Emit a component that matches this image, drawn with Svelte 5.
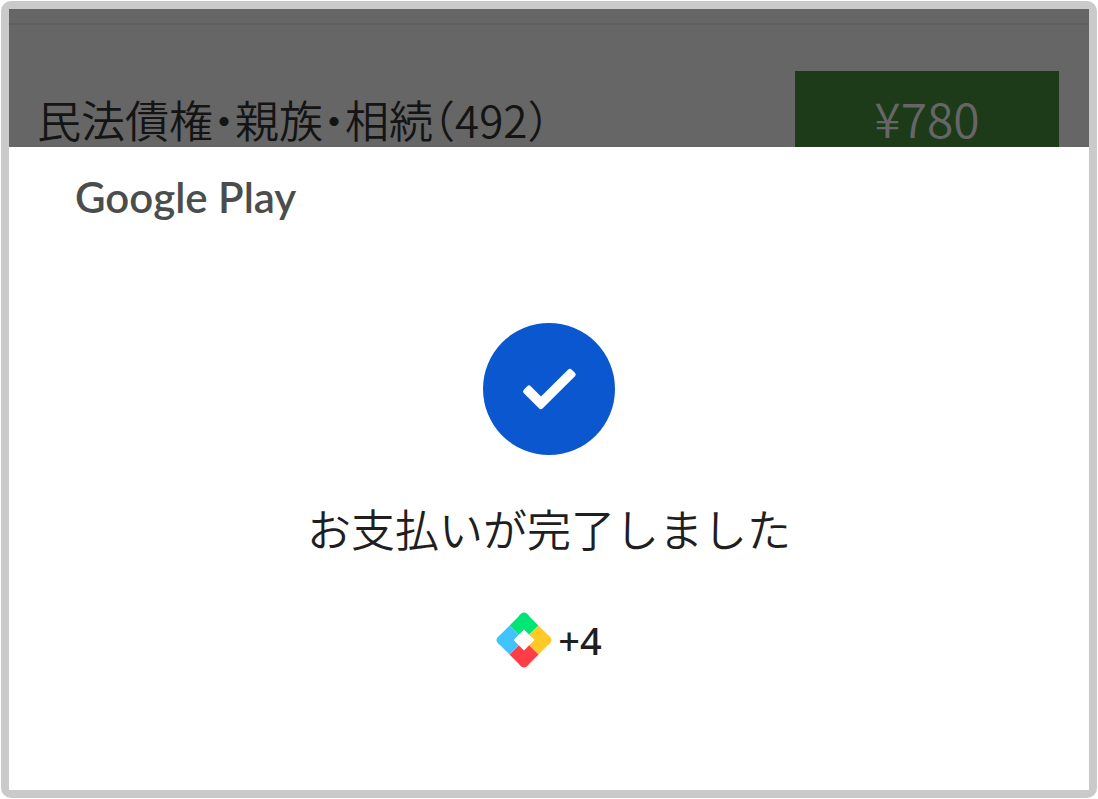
<script>
    let item = { name: "民法債権・親族・相続（492）", price: "¥780" };
    let points = 4;
</script>

<style>
    :global(body) {
        margin: 0;
        background-color: #ffffff;
    }
    .screen {
        box-sizing: border-box;
        display: flex;
        flex-direction: column;
        min-height: calc(100vh - 2px);
        margin: 1px;
        border: 8px solid #cacaca;
        border-radius: 10px;
        color: #1f1f1f;
        font-family: "Noto Sans CJK JP", sans-serif;
    }
    .behind {
        height: 138px;
        overflow: hidden;
        background-color: #666666;
    }
    .divider {
        height: 14px;
        border-bottom: 2px solid #5f5f5f;
    }
    .product {
        display: flex;
        align-items: flex-start;
        justify-content: space-between;
        padding: 46px 30px 0 28px;
    }
    .name {
        margin: 24px 0 0;
        color: #141414;
        font-size: 44px;
        font-weight: 350;
        line-height: 48px;
        font-feature-settings: "halt";
        white-space: nowrap;
    }
    .price {
        width: 264px;
        height: 92px;
        padding: 0;
        border: none;
        border-radius: 0;
        color: #666666;
        background-color: #1d3b18;
        font-family: inherit;
        font-size: 48px;
        font-weight: 350;
        line-height: 92px;
    }
    .sheet {
        flex: 1;
        display: flex;
        flex-direction: column;
        align-items: center;
        background-color: #ffffff;
    }
    .brand {
        align-self: stretch;
        padding: 22px 66px 0;
        color: #4b4d4c;
        font-family: Lato, sans-serif;
        font-size: 42px;
        font-weight: 600;
        line-height: 56px;
    }
    .done {
        width: 132px;
        height: 132px;
        margin-top: 98px;
    }
    .message {
        margin: 41px 0 0;
        font-size: 44px;
        font-weight: 350;
        line-height: 64px;
        text-align: center;
    }
    .reward {
        display: flex;
        align-items: center;
        gap: 6px;
        margin-top: 52px;
        font-family: "Noto Sans", sans-serif;
        font-size: 38px;
        font-weight: 500;
        line-height: 56px;
    }
    .gem {
        width: 56px;
        height: 56px;
    }
</style>

<div class="screen">
    <div class="behind">
        <div class="divider"></div>
        <div class="product">
            <p class="name">{item.name}</p>
            <button class="price">{item.price}</button>
        </div>
    </div>

    <main class="sheet">
        <div class="brand">Google Play</div>

        <svg class="done" viewBox="0 0 132 132" aria-hidden="true">
            <circle cx="66" cy="66" r="66" fill="#0b57d0" />
            <path d="M46 65 L58 77 L87 48.4 L90.2 51.6 L58 83.6 L42.6 68.4 Z" fill="#ffffff" stroke="#ffffff" stroke-width="5" stroke-linejoin="round" />
        </svg>

        <h1 class="message">お支払いが完了しました</h1>

        <div class="reward">
            <svg class="gem" viewBox="0 0 56 56" aria-hidden="true">
                <path d="M13.5 13.5 L22.5 4.5 Q28 -3.5 33.5 4.5 L42.5 13.5 L33.2 22.8 L28 17.6 L22.8 22.8 Z" fill="#00e676" />
                <path d="M42.5 13.5 L51.5 22.5 Q59.5 28 51.5 33.5 L42.5 42.5 L33.2 33.2 L38.4 28 L33.2 22.8 Z" fill="#ffca28" />
                <path d="M42.5 42.5 L33.5 51.5 Q28 59.5 22.5 51.5 L13.5 42.5 L22.8 33.2 L28 38.4 L33.2 33.2 Z" fill="#ff3d47" />
                <path d="M13.5 42.5 L4.5 33.5 Q-3.5 28 4.5 22.5 L13.5 13.5 L22.8 22.8 L17.6 28 L22.8 33.2 Z" fill="#40c4ff" />
            </svg>
            <span>+{points}</span>
        </div>
    </main>
</div>
